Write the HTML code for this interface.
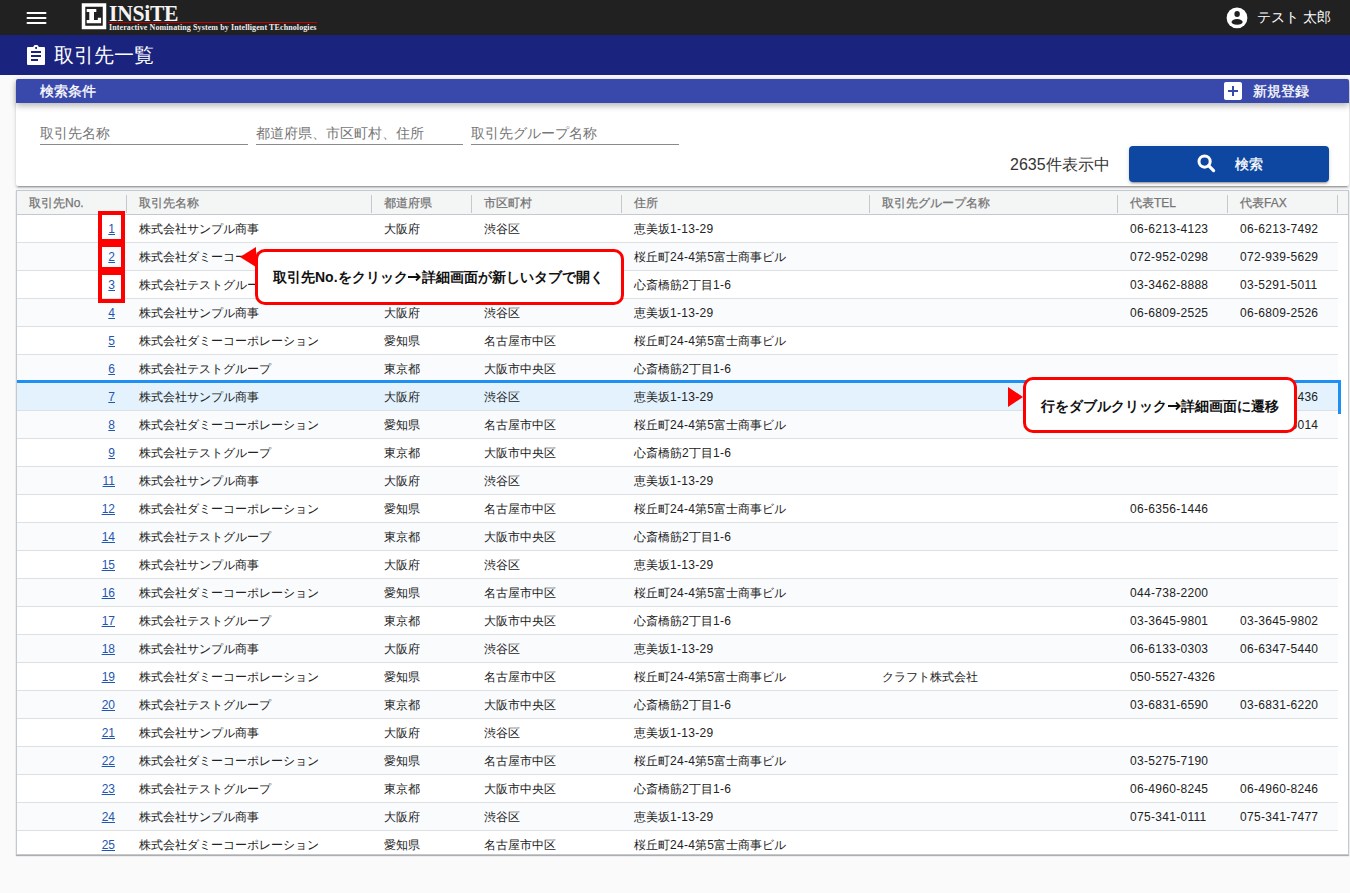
<!DOCTYPE html>
<html lang="ja">
<head>
<meta charset="utf-8">
<style>
*{box-sizing:border-box;margin:0;padding:0}
html,body{width:1350px;height:893px;overflow:hidden;background:#fafafa;font-family:"Liberation Sans",sans-serif;color:#222}
.abs{position:absolute}
#top{position:absolute;left:0;top:0;width:1350px;height:35px;background:#212121}
#title{position:absolute;left:0;top:35px;width:1350px;height:40px;background:#1a237e}
#title .t{position:absolute;left:54px;top:43px;font-size:20px;line-height:24px;color:#fff}
#card{position:absolute;left:16px;top:79px;width:1333px;height:107px;background:#fff;border-radius:2px;box-shadow:0 3px 1px -2px rgba(0,0,0,.2),0 2px 2px 0 rgba(0,0,0,.14),0 1px 5px 0 rgba(0,0,0,.12)}
#chead{position:absolute;left:0;top:0;width:1333px;height:24px;background:#3949ab;border-radius:2px 2px 0 0;box-shadow:0 3px 6px rgba(0,0,0,.28)}
#chead .l{position:absolute;left:24px;top:3px;font-size:14px;line-height:18px;color:#fff;-webkit-text-stroke:0.3px #fff}
#chead .rt{position:absolute;left:1237px;top:3px;font-size:14px;line-height:18px;color:#fff;-webkit-text-stroke:0.3px #fff}
.fld{position:absolute;top:123px;height:22px;border-bottom:1px solid #8a8a8a;font-size:14px;line-height:20px;color:#777}
#cnt{position:absolute;left:1010px;top:155px;font-size:16px;line-height:20px;color:#333}
#sbtn{position:absolute;left:1129px;top:146px;width:200px;height:36px;background:#0d47a1;border-radius:4px;box-shadow:0 3px 1px -2px rgba(0,0,0,.2),0 2px 2px 0 rgba(0,0,0,.14),0 1px 5px 0 rgba(0,0,0,.12)}
#sbtn .l{position:absolute;left:106px;top:9px;font-size:14px;line-height:18px;color:#fff;-webkit-text-stroke:0.3px #fff}
#tbl{position:absolute;left:16px;top:190px;width:1333px;height:665px;border:1px solid #c3c9ce;background:#fff;overflow:hidden;box-shadow:0 1px 1px rgba(0,0,0,.3)}
#th{position:absolute;left:0;top:0;width:1331px;height:24px;background:#f4f6f6;border-bottom:1px solid #c3c9ce}
#th .h{position:absolute;top:0;height:23px;font-size:12px;line-height:23px;padding-top:1px;color:#747474;-webkit-text-stroke:0.25px #747474;padding-left:12px;white-space:nowrap}
#th .h:after{content:"";position:absolute;right:0;top:4px;width:1px;height:18px;background:#c3c9ce}
.r{position:absolute;left:0;width:1321px;height:28px;border-bottom:1px solid #dde1e4;background:#fff}
.r.odd{background:#f9fbfd}
.r.sel{background:#e3f2fd}
.c{position:absolute;top:0;height:27px;font-size:12px;line-height:27px;padding-top:1px;padding-left:12px;white-space:nowrap;color:#222}
.c1{left:0;width:110px;text-align:right;padding-left:0;padding-right:12px}
.d{letter-spacing:0.3px}
.c1 a{color:#1e56b0;text-decoration:underline}
.c2{left:110px;width:245px}
.c3{left:355px;width:100px}
.c4{left:455px;width:150px}
.c5{left:605px;width:248px}
.c6{left:853px;width:248px}
.c7{left:1101px;width:110px}
.c8{left:1211px;width:110px}
#selbox{position:absolute;left:0;top:189px;width:1324px;height:34px;border-top:3px solid #1e90f5;border-right:3px solid #1e90f5}
.redbox{position:absolute;border:4px solid #ff0000}
.call{position:absolute;background:#fff;border:3px solid #f00;border-radius:10px;font-size:14px;font-weight:bold;color:#111;white-space:nowrap}
</style>
</head>
<body>
<div id="top">
  <svg class="abs" style="left:26px;top:11px" width="21" height="14" viewBox="0 0 21 14"><rect x="0.5" y="1" width="20" height="2" rx="1" fill="#fff"/><rect x="0.5" y="6" width="20" height="2" rx="1" fill="#fff"/><rect x="0.5" y="11" width="20" height="2" rx="1" fill="#fff"/></svg>
  <svg class="abs" style="left:81px;top:3px" width="26" height="27" viewBox="0 0 26 27"><rect x="2.5" y="2" width="21" height="22.5" fill="none" stroke="#fff" stroke-width="3.5"/><path d="M5.7 5.9H15.3V8.9H13V17H16.8V14.8H20.1V20.3H5.7V17H8.3V8.9H5.7Z" fill="#fff"/></svg>
  <div class="abs" style="left:109px;top:-1px;font-family:'Liberation Serif',serif;font-weight:bold;font-size:24px;line-height:28px;color:#f4f4f4;letter-spacing:-0.3px;transform:scaleX(0.9);transform-origin:0 0">INSiTE</div>
  <div class="abs" style="left:108px;top:22px;width:209px;height:1px;background:#c00000"></div>
  <div class="abs" style="left:109px;top:23px;font-family:'Liberation Serif',serif;font-weight:bold;font-size:8px;line-height:10px;color:#eee;white-space:nowrap;letter-spacing:0.1px">Interactive Nominating System by Intelligent TEchnologies</div>
  <svg class="abs" style="left:1225px;top:6px" width="24" height="24" viewBox="0 0 24 24"><circle cx="12" cy="11.9" r="10.4" fill="#fff"/><ellipse cx="12.1" cy="8" rx="2.75" ry="2.9" fill="#212121"/><ellipse cx="12.1" cy="15.9" rx="5.6" ry="2.8" fill="#212121"/></svg>
  <div class="abs" style="left:1257px;top:8px;font-size:14px;line-height:18px;color:#fff;white-space:nowrap">テスト 太郎</div>
</div>
<div id="title">
  <svg class="abs" style="left:20px;top:5px" width="32" height="30" viewBox="0 0 32 30"><rect x="7" y="7" width="18" height="18" rx="1" fill="#fff"/><path d="M12.8 7.5L14.3 5.2Q14.6 5 15 5H17Q17.4 5 17.7 5.2L19.2 7.5Z" fill="#fff"/><rect x="15.2" y="7" width="1.8" height="1.9" fill="#1a237e"/><rect x="11" y="11" width="10" height="2" fill="#1a237e"/><rect x="11" y="15" width="10" height="2" fill="#1a237e"/><rect x="11" y="19" width="7" height="2" fill="#1a237e"/></svg>
</div>
<div class="abs" style="left:54px;top:43px;font-size:20px;line-height:24px;color:#fff;white-space:nowrap">取引先一覧</div>
<div id="card">
  <div id="chead">
    <div class="l">検索条件</div>
    <svg class="abs" style="left:1205px;top:0px" width="24" height="24" viewBox="0 0 24 24"><path fill="#fff" d="M19 3H5c-1.11 0-2 .9-2 2v14c0 1.1.89 2 2 2h14c1.1 0 2-.9 2-2V5c0-1.1-.9-2-2-2zm-2 10h-4v4h-2v-4H7v-2h4V7h2v4h4v2z"/></svg>
    <div class="rt">新規登録</div>
  </div>
</div>
<div class="fld" style="left:40px;width:208px">取引先名称</div>
<div class="fld" style="left:256px;width:207px">都道府県、市区町村、住所</div>
<div class="fld" style="left:471px;width:208px">取引先グループ名称</div>
<div id="cnt">2635件表示中</div>
<div id="sbtn">
  <svg class="abs" style="left:66px;top:7px" width="22" height="22" viewBox="0 0 22 22"><circle cx="9.6" cy="8.6" r="5.6" fill="none" stroke="#fff" stroke-width="3"/><path d="M13.6 12.6L18.6 17.6" stroke="#fff" stroke-width="3.2" stroke-linecap="round"/></svg>
  <div class="l">検索</div>
</div>
<div id="tbl">
  <div id="th">
    <div class="h" style="left:0;width:110px">取引先No.</div>
    <div class="h" style="left:110px;width:245px">取引先名称</div>
    <div class="h" style="left:355px;width:100px">都道府県</div>
    <div class="h" style="left:455px;width:150px">市区町村</div>
    <div class="h" style="left:605px;width:248px">住所</div>
    <div class="h" style="left:853px;width:248px">取引先グループ名称</div>
    <div class="h" style="left:1101px;width:110px">代表TEL</div>
    <div class="h" style="left:1211px;width:110px">代表FAX</div>
  </div>
<div class="r" style="top:24px"><div class="c c1"><a>1</a></div><div class="c c2">株式会社サンプル商事</div><div class="c c3">大阪府</div><div class="c c4">渋谷区</div><div class="c c5">恵美坂<span class="d">1-13-29</span></div><div class="c c6"></div><div class="c c7"><span class="d">06-6213-4123</span></div><div class="c c8"><span class="d">06-6213-7492</span></div></div>
<div class="r odd" style="top:52px"><div class="c c1"><a>2</a></div><div class="c c2">株式会社ダミーコーポレーション</div><div class="c c3">愛知県</div><div class="c c4">名古屋市中区</div><div class="c c5">桜丘町<span class="d">24-4</span>第<span class="d">5</span>富士商事ビル</div><div class="c c6"></div><div class="c c7"><span class="d">072-952-0298</span></div><div class="c c8"><span class="d">072-939-5629</span></div></div>
<div class="r" style="top:80px"><div class="c c1"><a>3</a></div><div class="c c2">株式会社テストグループ</div><div class="c c3">東京都</div><div class="c c4">大阪市中央区</div><div class="c c5">心斎橋筋<span class="d">2</span>丁目<span class="d">1-6</span></div><div class="c c6"></div><div class="c c7"><span class="d">03-3462-8888</span></div><div class="c c8"><span class="d">03-5291-5011</span></div></div>
<div class="r odd" style="top:108px"><div class="c c1"><a>4</a></div><div class="c c2">株式会社サンプル商事</div><div class="c c3">大阪府</div><div class="c c4">渋谷区</div><div class="c c5">恵美坂<span class="d">1-13-29</span></div><div class="c c6"></div><div class="c c7"><span class="d">06-6809-2525</span></div><div class="c c8"><span class="d">06-6809-2526</span></div></div>
<div class="r" style="top:136px"><div class="c c1"><a>5</a></div><div class="c c2">株式会社ダミーコーポレーション</div><div class="c c3">愛知県</div><div class="c c4">名古屋市中区</div><div class="c c5">桜丘町<span class="d">24-4</span>第<span class="d">5</span>富士商事ビル</div><div class="c c6"></div><div class="c c7"></div><div class="c c8"></div></div>
<div class="r odd" style="top:164px"><div class="c c1"><a>6</a></div><div class="c c2">株式会社テストグループ</div><div class="c c3">東京都</div><div class="c c4">大阪市中央区</div><div class="c c5">心斎橋筋<span class="d">2</span>丁目<span class="d">1-6</span></div><div class="c c6"></div><div class="c c7"></div><div class="c c8"></div></div>
<div class="r sel" style="top:192px"><div class="c c1"><a>7</a></div><div class="c c2">株式会社サンプル商事</div><div class="c c3">大阪府</div><div class="c c4">渋谷区</div><div class="c c5">恵美坂<span class="d">1-13-29</span></div><div class="c c6"></div><div class="c c7"><span class="d">06-6809-2435</span></div><div class="c c8"><span class="d">06-6809-2436</span></div></div>
<div class="r odd" style="top:220px"><div class="c c1"><a>8</a></div><div class="c c2">株式会社ダミーコーポレーション</div><div class="c c3">愛知県</div><div class="c c4">名古屋市中区</div><div class="c c5">桜丘町<span class="d">24-4</span>第<span class="d">5</span>富士商事ビル</div><div class="c c6"></div><div class="c c7"><span class="d">072-952-0014</span></div><div class="c c8"><span class="d">072-939-6014</span></div></div>
<div class="r" style="top:248px"><div class="c c1"><a>9</a></div><div class="c c2">株式会社テストグループ</div><div class="c c3">東京都</div><div class="c c4">大阪市中央区</div><div class="c c5">心斎橋筋<span class="d">2</span>丁目<span class="d">1-6</span></div><div class="c c6"></div><div class="c c7"></div><div class="c c8"></div></div>
<div class="r odd" style="top:276px"><div class="c c1"><a>11</a></div><div class="c c2">株式会社サンプル商事</div><div class="c c3">大阪府</div><div class="c c4">渋谷区</div><div class="c c5">恵美坂<span class="d">1-13-29</span></div><div class="c c6"></div><div class="c c7"></div><div class="c c8"></div></div>
<div class="r" style="top:304px"><div class="c c1"><a>12</a></div><div class="c c2">株式会社ダミーコーポレーション</div><div class="c c3">愛知県</div><div class="c c4">名古屋市中区</div><div class="c c5">桜丘町<span class="d">24-4</span>第<span class="d">5</span>富士商事ビル</div><div class="c c6"></div><div class="c c7"><span class="d">06-6356-1446</span></div><div class="c c8"></div></div>
<div class="r odd" style="top:332px"><div class="c c1"><a>14</a></div><div class="c c2">株式会社テストグループ</div><div class="c c3">東京都</div><div class="c c4">大阪市中央区</div><div class="c c5">心斎橋筋<span class="d">2</span>丁目<span class="d">1-6</span></div><div class="c c6"></div><div class="c c7"></div><div class="c c8"></div></div>
<div class="r" style="top:360px"><div class="c c1"><a>15</a></div><div class="c c2">株式会社サンプル商事</div><div class="c c3">大阪府</div><div class="c c4">渋谷区</div><div class="c c5">恵美坂<span class="d">1-13-29</span></div><div class="c c6"></div><div class="c c7"></div><div class="c c8"></div></div>
<div class="r odd" style="top:388px"><div class="c c1"><a>16</a></div><div class="c c2">株式会社ダミーコーポレーション</div><div class="c c3">愛知県</div><div class="c c4">名古屋市中区</div><div class="c c5">桜丘町<span class="d">24-4</span>第<span class="d">5</span>富士商事ビル</div><div class="c c6"></div><div class="c c7"><span class="d">044-738-2200</span></div><div class="c c8"></div></div>
<div class="r" style="top:416px"><div class="c c1"><a>17</a></div><div class="c c2">株式会社テストグループ</div><div class="c c3">東京都</div><div class="c c4">大阪市中央区</div><div class="c c5">心斎橋筋<span class="d">2</span>丁目<span class="d">1-6</span></div><div class="c c6"></div><div class="c c7"><span class="d">03-3645-9801</span></div><div class="c c8"><span class="d">03-3645-9802</span></div></div>
<div class="r odd" style="top:444px"><div class="c c1"><a>18</a></div><div class="c c2">株式会社サンプル商事</div><div class="c c3">大阪府</div><div class="c c4">渋谷区</div><div class="c c5">恵美坂<span class="d">1-13-29</span></div><div class="c c6"></div><div class="c c7"><span class="d">06-6133-0303</span></div><div class="c c8"><span class="d">06-6347-5440</span></div></div>
<div class="r" style="top:472px"><div class="c c1"><a>19</a></div><div class="c c2">株式会社ダミーコーポレーション</div><div class="c c3">愛知県</div><div class="c c4">名古屋市中区</div><div class="c c5">桜丘町<span class="d">24-4</span>第<span class="d">5</span>富士商事ビル</div><div class="c c6">クラフト株式会社</div><div class="c c7"><span class="d">050-5527-4326</span></div><div class="c c8"></div></div>
<div class="r odd" style="top:500px"><div class="c c1"><a>20</a></div><div class="c c2">株式会社テストグループ</div><div class="c c3">東京都</div><div class="c c4">大阪市中央区</div><div class="c c5">心斎橋筋<span class="d">2</span>丁目<span class="d">1-6</span></div><div class="c c6"></div><div class="c c7"><span class="d">03-6831-6590</span></div><div class="c c8"><span class="d">03-6831-6220</span></div></div>
<div class="r" style="top:528px"><div class="c c1"><a>21</a></div><div class="c c2">株式会社サンプル商事</div><div class="c c3">大阪府</div><div class="c c4">渋谷区</div><div class="c c5">恵美坂<span class="d">1-13-29</span></div><div class="c c6"></div><div class="c c7"></div><div class="c c8"></div></div>
<div class="r odd" style="top:556px"><div class="c c1"><a>22</a></div><div class="c c2">株式会社ダミーコーポレーション</div><div class="c c3">愛知県</div><div class="c c4">名古屋市中区</div><div class="c c5">桜丘町<span class="d">24-4</span>第<span class="d">5</span>富士商事ビル</div><div class="c c6"></div><div class="c c7"><span class="d">03-5275-7190</span></div><div class="c c8"></div></div>
<div class="r" style="top:584px"><div class="c c1"><a>23</a></div><div class="c c2">株式会社テストグループ</div><div class="c c3">東京都</div><div class="c c4">大阪市中央区</div><div class="c c5">心斎橋筋<span class="d">2</span>丁目<span class="d">1-6</span></div><div class="c c6"></div><div class="c c7"><span class="d">06-4960-8245</span></div><div class="c c8"><span class="d">06-4960-8246</span></div></div>
<div class="r odd" style="top:612px"><div class="c c1"><a>24</a></div><div class="c c2">株式会社サンプル商事</div><div class="c c3">大阪府</div><div class="c c4">渋谷区</div><div class="c c5">恵美坂<span class="d">1-13-29</span></div><div class="c c6"></div><div class="c c7"><span class="d">075-341-0111</span></div><div class="c c8"><span class="d">075-341-7477</span></div></div>
<div class="r" style="top:640px"><div class="c c1"><a>25</a></div><div class="c c2">株式会社ダミーコーポレーション</div><div class="c c3">愛知県</div><div class="c c4">名古屋市中区</div><div class="c c5">桜丘町<span class="d">24-4</span>第<span class="d">5</span>富士商事ビル</div><div class="c c6"></div><div class="c c7"></div><div class="c c8"></div></div>
  <div id="selbox"></div>
</div>
<div class="redbox" style="left:98px;top:211px;width:27px;height:32px"></div>
<div class="redbox" style="left:98px;top:243px;width:27px;height:28px"></div>
<div class="redbox" style="left:98px;top:271px;width:27px;height:32px"></div>
<div class="call" style="left:255px;top:249px;width:369px;height:56px;padding:13px 0 0 15px;line-height:24px">取引先No.をクリック<svg style="display:inline-block;vertical-align:0px;margin:0 0.5px" width="13" height="10" viewBox="0 0 13 10"><path d="M0 5H11.5M8 1.5L11.8 5L8 8.5" fill="none" stroke="#111" stroke-width="1.8"/></svg>詳細画面が新しいタブで開く</div>
<svg class="abs" style="left:240px;top:246px" width="17" height="22" viewBox="0 0 17 22"><path d="M0 11L16 1V21z" fill="#f00"/></svg>
<div class="call" style="left:1023px;top:377px;width:274px;height:56px;padding:14px 0 0 15px;line-height:24px">行をダブルクリック<svg style="display:inline-block;vertical-align:0px;margin:0 0.5px" width="13" height="10" viewBox="0 0 13 10"><path d="M0 5H11.5M8 1.5L11.8 5L8 8.5" fill="none" stroke="#111" stroke-width="1.8"/></svg>詳細画面に遷移</div>
<svg class="abs" style="left:1007px;top:387px" width="17" height="20" viewBox="0 0 17 20"><path d="M16 10L1 0V20z" fill="#f00"/></svg>
</body>
</html>
